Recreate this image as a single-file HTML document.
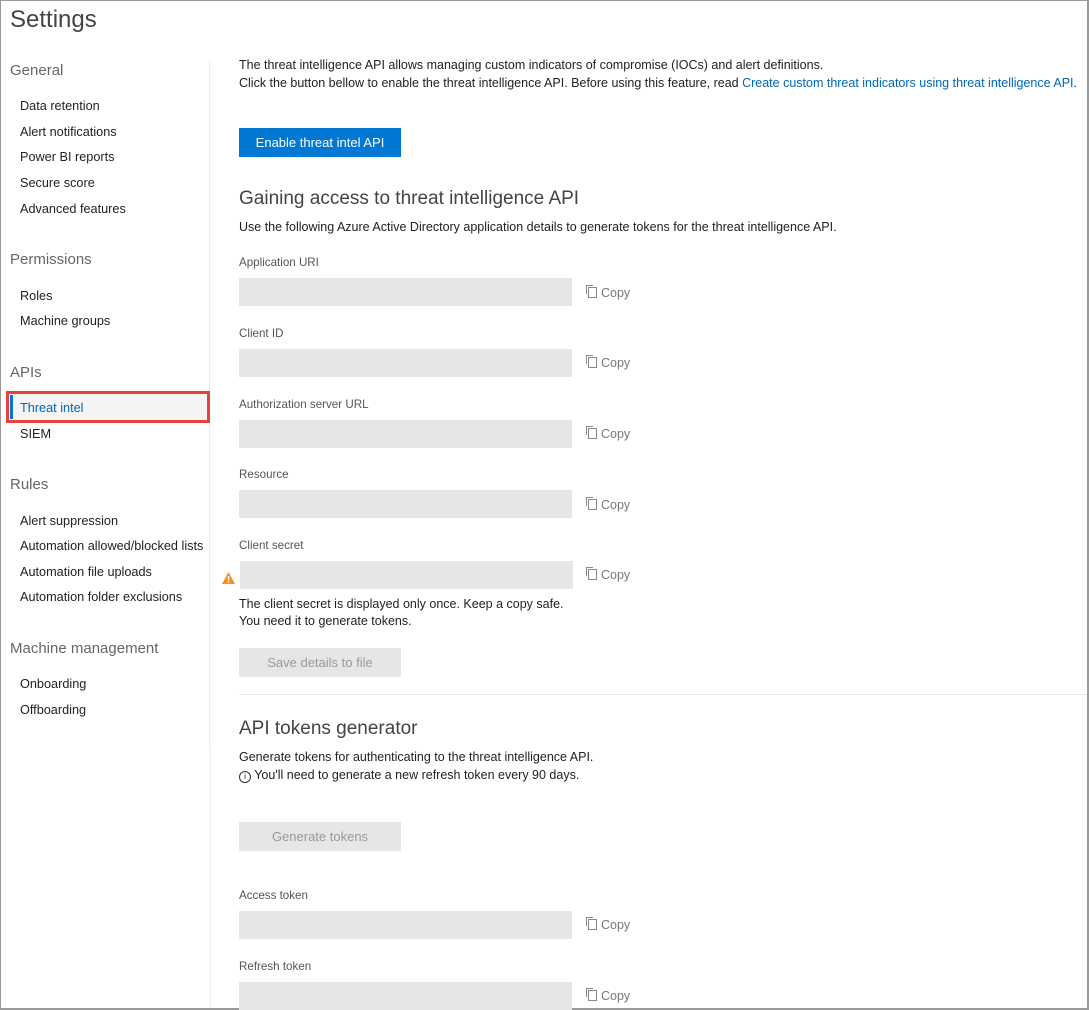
<!DOCTYPE html><html><head><style>
body{margin:0;width:1089px;height:1010px;overflow:hidden;font-family:"Liberation Sans",sans-serif;color:#222;background:#fff;position:relative}
.a{position:absolute;white-space:nowrap}
.frame{position:absolute;left:0;top:0;width:1086px;height:1007px;border:1px solid #999;border-width:1px 2px 2px 1px}
.s{font-size:12.5px}
.h{font-size:15px;color:#666}
.n{font-size:12.7px;left:20px}
.lbl{font-size:11.6px;color:#555;left:239px}
.box{position:absolute;left:239px;width:333px;height:28px;background:#e6e6e6}
.cp{position:absolute;left:588px;font-size:12.5px;color:#777}
.cp i{display:inline-block;width:7px;height:9px;border:1px solid #888;margin-right:4px;vertical-align:-1px;box-shadow:-2px -2px 0 -1px #fff,-3px -3px 0 -1px #888}
.btn{position:absolute;left:239px;width:162px;height:29px;background:#e6e6e6;color:#999;font-size:13px;text-align:center;line-height:29px}
.h2{font-size:19px;color:#444;left:239px}
</style></head><body>
<div class="frame"></div>
<div class="a" style="left:10px;top:6px;font-size:24px;color:#444">Settings</div>
<div style="position:absolute;left:209px;top:60px;width:1px;height:690px;background:#eee"></div>
<div style="position:absolute;left:210px;top:750px;width:1px;height:258px;background:#eee"></div>
<div class="a h" style="left:10px;top:62px">General</div>
<div class="a n" style="top:99px">Data retention</div>
<div class="a n" style="top:125px">Alert notifications</div>
<div class="a n" style="top:150px">Power BI reports</div>
<div class="a n" style="top:176px">Secure score</div>
<div class="a n" style="top:202px">Advanced features</div>
<div class="a h" style="left:10px;top:251px">Permissions</div>
<div class="a n" style="top:289px">Roles</div>
<div class="a n" style="top:314px">Machine groups</div>
<div class="a h" style="left:10px;top:364px">APIs</div>
<div style="position:absolute;left:6px;top:391px;width:198px;height:26px;border:3px solid #e8423d;background:#f4f4f4"></div>
<div style="position:absolute;left:10px;top:395px;width:3px;height:24px;background:#0078d4"></div>
<div class="a n" style="top:401px;color:#0067b8">Threat intel</div>
<div class="a n" style="top:427px">SIEM</div>
<div class="a h" style="left:10px;top:476px">Rules</div>
<div class="a n" style="top:514px">Alert suppression</div>
<div class="a n" style="top:539px">Automation allowed/blocked lists</div>
<div class="a n" style="top:565px">Automation file uploads</div>
<div class="a n" style="top:590px">Automation folder exclusions</div>
<div class="a h" style="left:10px;top:640px">Machine management</div>
<div class="a n" style="top:677px">Onboarding</div>
<div class="a n" style="top:703px">Offboarding</div>

<div class="a s" style="left:239px;top:58px">The threat intelligence API allows managing custom indicators of compromise (IOCs) and alert definitions.</div>
<div class="a s" style="left:239px;top:76px">Click the button bellow to enable the threat intelligence API. Before using this feature, read <span style="color:#0067b8">Create custom threat indicators using threat intelligence API</span>.</div>
<div style="position:absolute;left:239px;top:128px;width:162px;height:29px;background:#0078d4;color:#fff;font-size:13px;text-align:center;line-height:29px">Enable threat intel API</div>
<div class="a h2" style="top:188px">Gaining access to threat intelligence API</div>
<div class="a s" style="left:239px;top:220px">Use the following Azure Active Directory application details to generate tokens for the threat intelligence API.</div>
<div class="a lbl" style="top:256px">Application URI</div><div class="box" style="top:278px"></div><div class="cp" style="top:286px"><i></i>Copy</div>
<div class="a lbl" style="top:327px">Client ID</div><div class="box" style="top:349px"></div><div class="cp" style="top:356px"><i></i>Copy</div>
<div class="a lbl" style="top:398px">Authorization server URL</div><div class="box" style="top:420px"></div><div class="cp" style="top:427px"><i></i>Copy</div>
<div class="a lbl" style="top:468px">Resource</div><div class="box" style="top:490px"></div><div class="cp" style="top:498px"><i></i>Copy</div>
<div class="a lbl" style="top:539px">Client secret</div><div class="box" style="top:561px;left:240px"></div><div class="cp" style="top:568px"><i></i>Copy</div>
<svg class="a" style="left:221px;top:571px" width="15" height="14"><path d="M7.5 1L14 13H1z" fill="#f7901e"/><rect x="6.8" y="5" width="1.4" height="4.5" fill="#fff"/><rect x="6.8" y="10.3" width="1.4" height="1.4" fill="#fff"/></svg>
<div class="a s" style="left:239px;top:597px">The client secret is displayed only once. Keep a copy safe.</div>
<div class="a s" style="left:239px;top:614px">You need it to generate tokens.</div>
<div class="btn" style="top:648px">Save details to file</div>
<div style="position:absolute;left:239px;top:694px;width:848px;height:1px;background:#e8e8e8"></div>
<div class="a h2" style="top:718px">API tokens generator</div>
<div class="a s" style="left:239px;top:750px">Generate tokens for authenticating to the threat intelligence API.</div>
<div class="a s" style="left:239px;top:768px"><span style="display:inline-block;width:10px;height:10px;border:1px solid #333;border-radius:50%;font-size:8px;line-height:10px;text-align:center;vertical-align:0px">i</span> You'll need to generate a new refresh token every 90 days.</div>
<div class="btn" style="top:822px">Generate tokens</div>
<div class="a lbl" style="top:889px">Access token</div><div class="box" style="top:911px"></div><div class="cp" style="top:918px"><i></i>Copy</div>
<div class="a lbl" style="top:960px">Refresh token</div><div class="box" style="top:982px"></div><div class="cp" style="top:989px"><i></i>Copy</div>
</body></html>
